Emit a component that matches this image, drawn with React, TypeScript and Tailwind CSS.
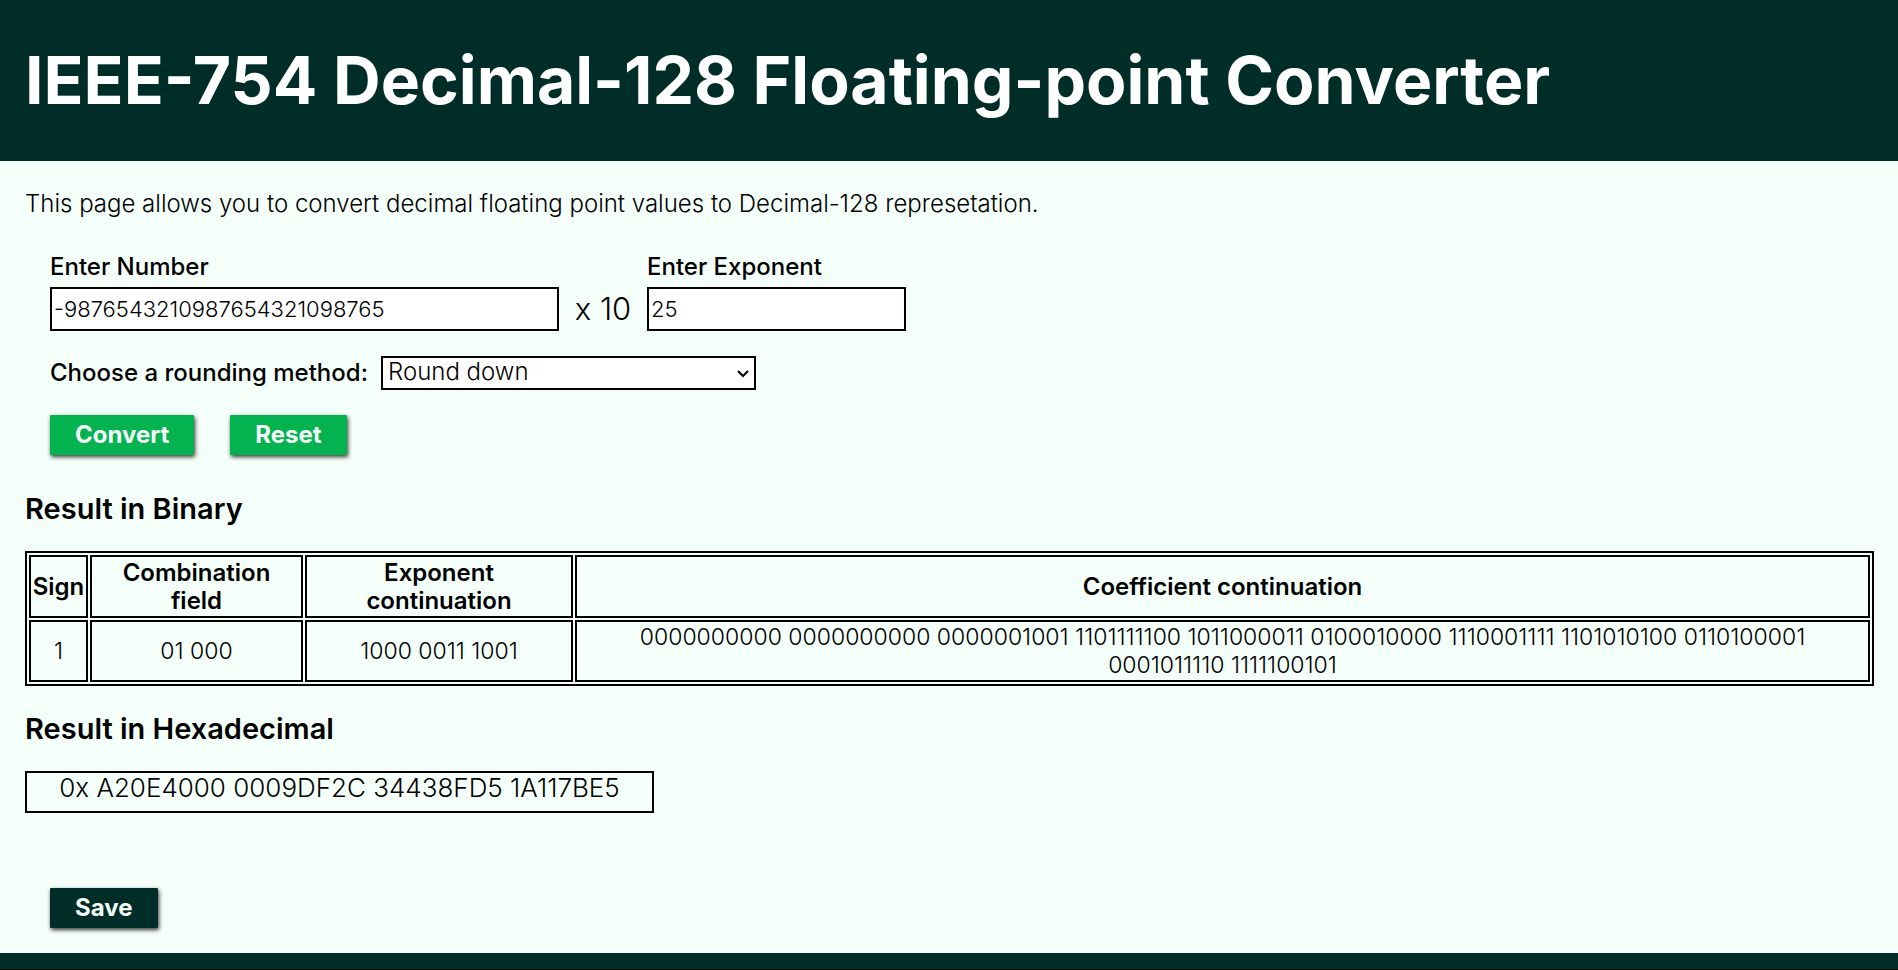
import { useState } from "react";

const columns = [
  { title: "Sign", value: "1", width: "w-[59px] px-0" },
  { title: "Combination field", value: "01 000", width: "w-[213px] px-3" },
  { title: "Exponent continuation", value: "1000 0011 1001", width: "w-[268px] px-3" },
  {
    title: "Coefficient continuation",
    value:
      "0000000000 0000000000 0000001001 1101111100 1011000011 0100010000 1110001111 1101010100 0110100001 0001011110 1111100101",
    width: "px-3",
  },
];

const buttonStyle =
  "h-10 px-[25px] text-[24px] leading-7 font-bold text-[#f5fffa] rounded-[1px] shadow-[1px_2px_4px_rgba(0,0,0,0.8)]";
const fieldStyle = "h-11 border-2 border-black bg-white px-[2px] text-[22px] font-light";

export default function App() {
  const [number, setNumber] = useState("-9876543210987654321098765");
  const [exponent, setExponent] = useState("25");
  const [rounding, setRounding] = useState("Round down");

  return (
    <div className="flex min-h-screen flex-col bg-[#f5fffa] font-['Inter','Liberation_Sans',sans-serif] text-[24px] leading-7 font-light text-black">
      <header className="bg-[#002d28] px-[25px] py-10">
        <h1 className="text-[66px] leading-[81px] font-bold text-white">
          IEEE-754 Decimal-128 Floating-point Converter
        </h1>
      </header>

      <main className="pt-[29px] pr-6 pb-[25px] pl-[25px]">
        <p>This page allows you to convert decimal floating point values to Decimal-128 represetation.</p>

        <form className="px-[25px] pt-[35px]" onSubmit={(event) => event.preventDefault()}>
          <div className="flex items-end">
            <div className="flex w-[509px] flex-col gap-[6px]">
              <label htmlFor="number" className="font-medium">
                Enter Number
              </label>
              <input
                id="number"
                className={fieldStyle}
                value={number}
                onChange={(event) => setNumber(event.target.value)}
              />
            </div>
            <span className="w-[88px] text-center text-[31px] leading-[44px]">x 10</span>
            <div className="flex w-[259px] flex-col gap-[6px]">
              <label htmlFor="exponent" className="font-medium">
                Enter Exponent
              </label>
              <input
                id="exponent"
                className={fieldStyle}
                value={exponent}
                onChange={(event) => setExponent(event.target.value)}
              />
            </div>
          </div>

          <div className="mt-[25px] flex items-center">
            <label htmlFor="rounding" className="w-[331px] font-medium">
              Choose a rounding method:
            </label>
            <div className="relative w-[375px]">
              <select
                id="rounding"
                className="block h-[34px] w-full appearance-none border-2 border-black bg-white pr-8 pb-[2px] pl-[5px] text-[24px] leading-7 font-light"
                value={rounding}
                onChange={(event) => setRounding(event.target.value)}
              >
                <option>Round down</option>
                <option>Round up</option>
                <option>Truncate</option>
                <option>Round to nearest, ties to even</option>
              </select>
              <svg
                aria-hidden="true"
                className="pointer-events-none absolute top-[14px] right-[7px]"
                width="12"
                height="8"
                viewBox="0 0 12 8"
                fill="none"
                stroke="black"
                strokeWidth="2"
              >
                <path d="M1 1L6 6L11 1" />
              </svg>
            </div>
          </div>

          <div className="mt-[25px] flex gap-9">
            <button type="submit" className={`${buttonStyle} bg-[#04b34f]`}>
              Convert
            </button>
            <button type="reset" className={`${buttonStyle} bg-[#04b34f]`}>
              Reset
            </button>
          </div>
        </form>

        <h2 className="mt-[38px] text-[29px] leading-8 font-semibold">Result in Binary</h2>
        <table className="mt-[26px] w-full table-fixed border-separate border-spacing-[2px] border-2 border-black text-center">
          <thead>
            <tr>
              {columns.map((column) => (
                <th
                  key={column.title}
                  scope="col"
                  className={`${column.width} border-2 border-black pt-[2px] pb-px font-semibold`}
                >
                  {column.title}
                </th>
              ))}
            </tr>
          </thead>
          <tbody>
            <tr>
              {columns.map((column) => (
                <td key={column.title} className="border-2 border-black px-3 py-px text-[23px]">
                  {column.value}
                </td>
              ))}
            </tr>
          </tbody>
        </table>

        <h2 className="mt-[27px] text-[29px] leading-8 font-semibold">Result in Hexadecimal</h2>
        <p className="mt-[26px] h-[42px] w-[629px] border-2 border-black text-center text-[26px] leading-[30px]">
          0x A20E4000 0009DF2C 34438FD5 1A117BE5
        </p>

        <div className="px-[25px] pt-[75px]">
          <button type="button" className={`${buttonStyle} bg-[#002d28]`}>
            Save
          </button>
        </div>
      </main>

      <footer className="min-h-4 grow border-b border-black bg-[#002d28]" />
    </div>
  );
}
